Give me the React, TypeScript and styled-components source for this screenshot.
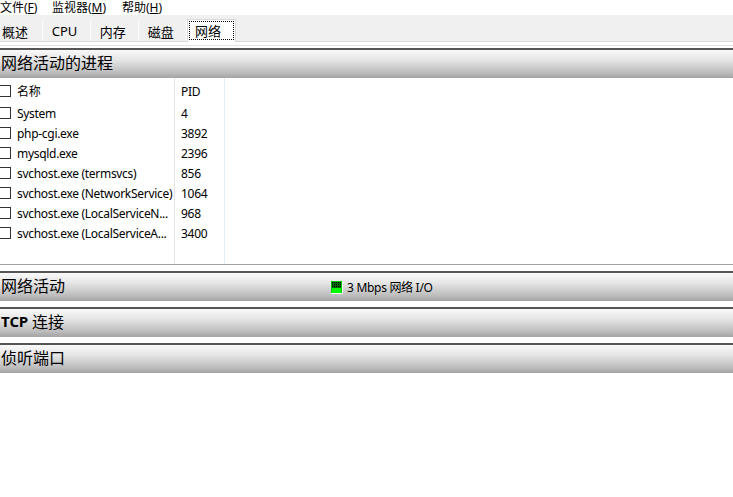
import React from "react";
import styled, { createGlobalStyle } from "styled-components";

const GlobalStyle = createGlobalStyle`
  html, body { margin: 0; padding: 0; background: #fff; overflow: hidden; }
  body { font-family: "Noto Sans", "Noto Sans CJK SC", sans-serif; color: #000; }
`;

const cjk = `"Noto Sans", "Noto Sans CJK SC", sans-serif`;

const Page = styled.div`
  width: 733px;
  height: 497px;
  display: flex;
  flex-direction: column;
`;

const MenuBar = styled.div`
  height: 15px;
  display: flex;
  align-items: center;
  font-family: ${cjk};
  font-size: 12px;
  line-height: 15px;
`;

const MenuItem = styled.span<{ $w: number }>`
  width: ${(p) => p.$w}px;
  white-space: nowrap;
  u { text-decoration: underline; text-underline-offset: 1px; }
`;

const TabStrip = styled.div`
  height: 26px;
  background: #f0f0f0;
  display: flex;
  align-items: flex-end;
  border-bottom: 1px solid #d9d9d9;
`;

const Tab = styled.div<{ $w: number; $active?: boolean }>`
  width: ${(p) => p.$w}px;
  box-sizing: border-box;
  height: ${(p) => (p.$active ? 23 : 20)}px;
  margin-bottom: ${(p) => (p.$active ? -1 : 0)}px;
  background: ${(p) => (p.$active ? "#fff" : "#f0f0f0")};
  border-right: 1px solid ${(p) => (p.$active ? "#d9d9d9" : "#fff")};
  border-left: ${(p) => (p.$active ? "1px solid #d9d9d9" : "none")};
  border-top: ${(p) => (p.$active ? "1px solid #d9d9d9" : "none")};
  font-family: ${cjk};
  font-size: 13px;
  display: flex;
  align-items: center;
  padding: ${(p) => (p.$active ? "1px 1px 2px 1px" : "0 0 0 2px")};
  position: relative;
  z-index: ${(p) => (p.$active ? 1 : 0)};
`;

const TabFocus = styled.span`
  flex: 1;
  height: 100%;
  box-sizing: border-box;
  border: 1px dotted #000;
  display: flex;
  align-items: center;
  padding-left: 5px;
`;

const Gap = styled.div<{ $h: number; $c?: string }>`
  height: ${(p) => p.$h}px;
  background: ${(p) => p.$c || "#fff"};
  flex: none;
`;

const SectionHeader = styled.div`
  flex: none;
  box-sizing: border-box;
  height: 30px;
  border-top: 2px solid #555;
  background: linear-gradient(to bottom, #f9f9f9 0%, #e6e6e6 35%, #bdbdbd 80%, #a3a3a3 100%);
  display: flex;
  align-items: center;
  font-family: ${cjk};
  font-size: 16px;
  padding: 0 0 5px 1px;
  position: relative;
  b { font-weight: 700; font-size: 15px; font-family: "Open Sans", "Noto Sans CJK SC", sans-serif; letter-spacing: -0.3px; }
`;

const HeaderExtra = styled.div`
  position: absolute;
  left: 331px;
  top: 5px;
  display: flex;
  align-items: center;
  gap: 4px;
  font-family: ${cjk};
  font-size: 12px;
  letter-spacing: -0.3px;
`;

const ListPanel = styled.div`
  flex: none;
  height: 186px;
  display: grid;
  grid-template-columns: 175px 50px 1fr;
  border-bottom: 1px solid #a0a0a0;
`;

const Column = styled.div<{ $border?: string }>`
  display: flex;
  flex-direction: column;
  border-right: 1px solid ${(p) => p.$border || "transparent"};
  padding-top: 3px;
  min-width: 0;
  overflow: hidden;
`;

const Cell = styled.div<{ $head?: boolean }>`
  height: 20px;
  flex: none;
  margin-bottom: ${(p) => (p.$head ? 2 : 0)}px;
  display: flex;
  align-items: center;
  gap: 6px;
  font-family: ${cjk};
  font-size: 12px;
  letter-spacing: -0.3px;
  white-space: nowrap;
  overflow: hidden;
  min-width: 0;
`;

const NumCell = styled(Cell)`
  padding-left: 6px;
`;

const Check = styled.span`
  flex: none;
  width: 12px;
  height: 12px;
  box-sizing: border-box;
  border: 1px solid #333;
  margin-left: -1px;
  background: #fff;
`;

const Name = styled.span`
  flex: 1;
  min-width: 0;
  overflow: hidden;
  text-overflow: ellipsis;
  white-space: nowrap;
`;

const Section = styled.div`
  display: flex;
  flex-direction: column;
`;

const IoIcon = () => (
  <svg width="12" height="13" viewBox="0 0 12 13">
    <rect x="0" y="0" width="12" height="13" fill="#fff" />
    <rect x="0" y="0" width="11" height="12" fill="#00cc00" />
    <rect x="1" y="1" width="9" height="6" fill="#006600" />
    {Array.from({ length: 3 }).map((_, r) =>
      Array.from({ length: 5 }).map((__, c) => (
        <rect key={`${r}-${c}`} x={1 + c * 2} y={1 + r * 2} width="1" height="1" fill="#000" />
      ))
    )}
    <rect x="1" y="7" width="9" height="5" fill="#00ff00" />
  </svg>
);

const rows: [string, string][] = [
  ["System", "4"],
  ["php-cgi.exe", "3892"],
  ["mysqld.exe", "2396"],
  ["svchost.exe (termsvcs)", "856"],
  ["svchost.exe (NetworkService)", "1064"],
  ["svchost.exe (LocalServiceN...", "968"],
  ["svchost.exe (LocalServiceA...", "3400"],
];

export default function App() {
  return (
    <Page>
      <GlobalStyle />
      <MenuBar>
        <MenuItem $w={52}>文件(<u>F</u>)</MenuItem>
        <MenuItem $w={70}>监视器(<u>M</u>)</MenuItem>
        <MenuItem $w={60}>帮助(<u>H</u>)</MenuItem>
      </MenuBar>
      <TabStrip>
        <Tab $w={43}>概述</Tab>
        <Tab $w={48}>&nbsp;&nbsp;CPU</Tab>
        <Tab $w={48}>&nbsp;&nbsp;内存</Tab>
        <Tab $w={48}>&nbsp;&nbsp;磁盘</Tab>
        <Tab $w={49} $active>
          <TabFocus>网络</TabFocus>
        </Tab>
      </TabStrip>
      <Gap $h={3} />
      <Gap $h={1} $c="#e3e3e3" />
      <Gap $h={2} />
      <Section>
        <SectionHeader>网络活动的进程</SectionHeader>
        <ListPanel>
          <Column $border="#e6e6e6">
            <Cell $head>
              <Check />
              <Name>名称</Name>
            </Cell>
            {rows.map(([n]) => (
              <Cell key={n}>
                <Check />
                <Name>{n}</Name>
              </Cell>
            ))}
          </Column>
          <Column $border="#e3ecf7">
            <NumCell $head>PID</NumCell>
            {rows.map(([n, p]) => (
              <NumCell key={n}>{p}</NumCell>
            ))}
          </Column>
          <Column />
        </ListPanel>
      </Section>
      <Gap $h={6} />
      <SectionHeader>
        网络活动
        <HeaderExtra>
          <IoIcon />
          3 Mbps 网络 I/O
        </HeaderExtra>
      </SectionHeader>
      <Gap $h={6} />
      <SectionHeader>
        <b>TCP</b>&nbsp;连接
      </SectionHeader>
      <Gap $h={6} />
      <SectionHeader>侦听端口</SectionHeader>
    </Page>
  );
}
